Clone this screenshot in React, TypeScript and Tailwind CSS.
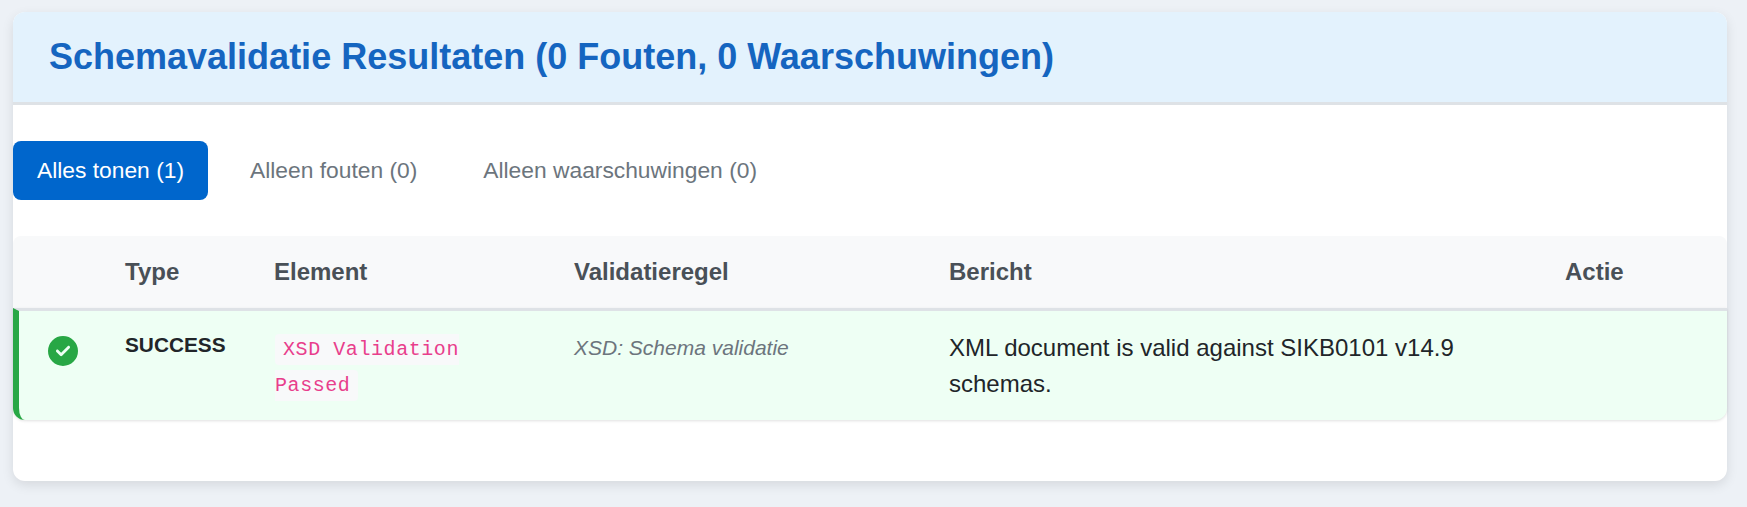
export default function App() {
  const tabs = ["Alleen fouten (0)", "Alleen waarschuwingen (0)"];
  return (
    <div className="min-h-[507px] bg-[#edf1f6] px-[13px] pt-3 pb-[26px] font-['Liberation_Sans',Arial,sans-serif] text-[#212529]">
      <div className="h-[469px] w-[1714px] rounded-xl bg-white shadow-[0_4px_12px_rgba(0,0,0,0.1)]">
        <div className="flex h-[93px] items-center rounded-t-xl border-b-[3px] border-[#dee2e6] bg-[#e3f2fd] px-9">
          <h1 className="text-[36px] font-bold text-[#1565c0]">Schemavalidatie Resultaten (0 Fouten, 0 Waarschuwingen)</h1>
        </div>
        <div className="mt-9 flex gap-[18px]">
          <button className="h-[59px] rounded-lg bg-[#0066cc] px-6 text-[22.8px] text-white">Alles tonen (1)</button>
          {tabs.map((t) => (
            <button key={t} className="h-[59px] px-6 text-[22.8px] text-[#6c757d]">{t}</button>
          ))}
        </div>
        <div className="mt-9">
          <div className="grid h-[72px] grid-cols-[96px_149px_300px_375px_616px_178px] items-center rounded-t-lg bg-[#f8f9fa] text-[24px] font-bold text-[#495057]">
            <div />
            <div className="px-4">Type</div>
            <div className="px-4">Element</div>
            <div className="px-4">Validatieregel</div>
            <div className="px-4">Bericht</div>
            <div className="px-4">Actie</div>
          </div>
          <div className="grid h-[112px] grid-cols-[90px_149px_300px_375px_616px_178px] rounded-b-xl border-t-[3px] border-l-[6px] border-t-[#dee2e6] border-l-[#28a745] bg-[#eefff4] shadow-[0_1px_3px_rgba(0,0,0,0.12)]">
            <div className="pt-[25px] pl-[29px]">
              <svg viewBox="0 0 512 512" className="h-[30px] w-[30px]" fill="#28a745">
                <path d="M256 512a256 256 0 1 0 0-512 256 256 0 1 0 0 512zm113-303L241 337c-9.400 9.400-24.600 9.400-33.900 0l-64-64c-9.400-9.400-9.400-24.600 0-33.900s24.600-9.400 33.900 0l47 47L335 175c9.400-9.400 24.600-9.400 33.900 0s9.400 24.600 0 33.900z" />
              </svg>
            </div>
            <div className="px-4 pt-[20px] text-[20.800px] leading-[27px] font-bold">SUCCESS</div>
            <div className="pt-[21px] pr-4 pl-[17px] leading-[36px]">
              <code className="rounded bg-[#f8f9fa] px-2 py-1 font-['Liberation_Mono',monospace] text-[20px] tracking-[0.57px] text-[#e83e8c]">XSD Validation Passed</code>
            </div>
            <div className="px-4 pt-[19px] text-[21px] leading-[36px] text-[#6c757d] italic">XSD: Schema validatie</div>
            <div className="px-4 pt-[19px] text-[24px] leading-[36px]">XML document is valid against SIKB0101 v14.9 schemas.</div>
            <div />
          </div>
        </div>
      </div>
    </div>
  );
}
